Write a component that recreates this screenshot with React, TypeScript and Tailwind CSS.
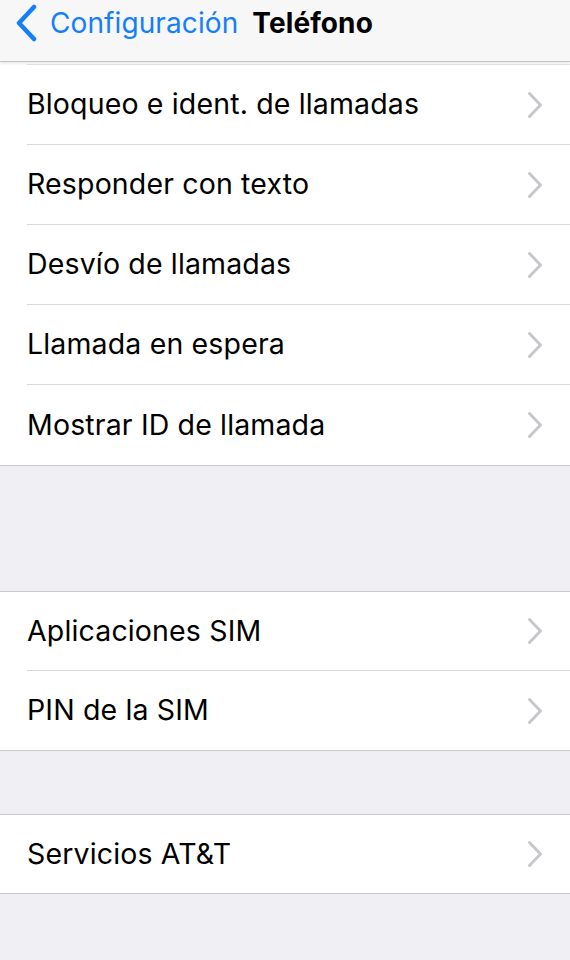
const groups = [
  [
    'Bloqueo e ident. de llamadas',
    'Responder con texto',
    'Desvío de llamadas',
    'Llamada en espera',
    'Mostrar ID de llamada',
  ],
  ['Aplicaciones SIM', 'PIN de la SIM'],
  ['Servicios AT&T'],
]

function Chevron() {
  return (
    <svg width="16" height="28" viewBox="0 0 16 28" className="shrink-0">
      <path d="M2.5 2.5 L13.5 14 L2.5 25.5" fill="none" stroke="#c7c7cc" strokeWidth="3" strokeLinecap="round" strokeLinejoin="round" />
    </svg>
  )
}

function Row({ label, last, h }: { label: string; last: boolean; h: string }) {
  return (
    <div className="bg-white pl-[27px]">
      <div className={`flex items-center justify-between pr-[27px] ${h} ${last ? '' : 'border-b border-[#d9d8dc]'}`}>
        <span className="text-[28.5px] tracking-[0.15px] text-black">{label}</span>
        <Chevron />
      </div>
    </div>
  )
}

export default function App() {
  return (
    <div className="min-h-[960px] w-[570px] bg-[#efeff4]" style={{ fontFamily: 'Inter, "Liberation Sans", sans-serif' }}>
      {/* Nav bar */}
      <div className="relative z-10 flex h-[62px] items-center border-b border-[#c4c4c8] bg-[#f7f7f8] pb-[16px] shadow-[0_1px_3px_rgba(0,0,0,0.12)]">
        <svg width="26" height="38" viewBox="0 0 26 38" className="ml-[13px]">
          <path d="M21 3 L6 19 L21 35" fill="none" stroke="#157efb" strokeWidth="4.5" strokeLinecap="round" strokeLinejoin="round" />
        </svg>
        <span className="ml-[11px] text-[28px] tracking-[0.1px] text-[#157efb]">Configuración</span>
        <span className="ml-[14px] text-[28px] font-bold tracking-[0.1px] text-black">Teléfono</span>
      </div>

      {/* Group 1 (scrolled) */}
      <div className="bg-white pt-[2px]">
        <div className="ml-[27px] border-t border-[#e6e5e8]" />
      </div>
      <div className="border-b border-[#c8c7cc]">
        {groups[0].map((l, i) => (
          <Row key={l} label={l} h="h-[80px]" last={i === groups[0].length - 1} />
        ))}
      </div>

      <div className="h-[125px]" />
      <div className="border-y border-[#c8c7cc]">
        {groups[1].map((l, i) => (
          <Row key={l} label={l} h="h-[79px]" last={i === groups[1].length - 1} />
        ))}
      </div>

      <div className="h-[63px]" />
      <div className="border-y border-[#c8c7cc]">
        {groups[2].map((l, i) => (
          <Row key={l} label={l} h="h-[78px]" last={i === groups[2].length - 1} />
        ))}
      </div>
    </div>
  )
}
